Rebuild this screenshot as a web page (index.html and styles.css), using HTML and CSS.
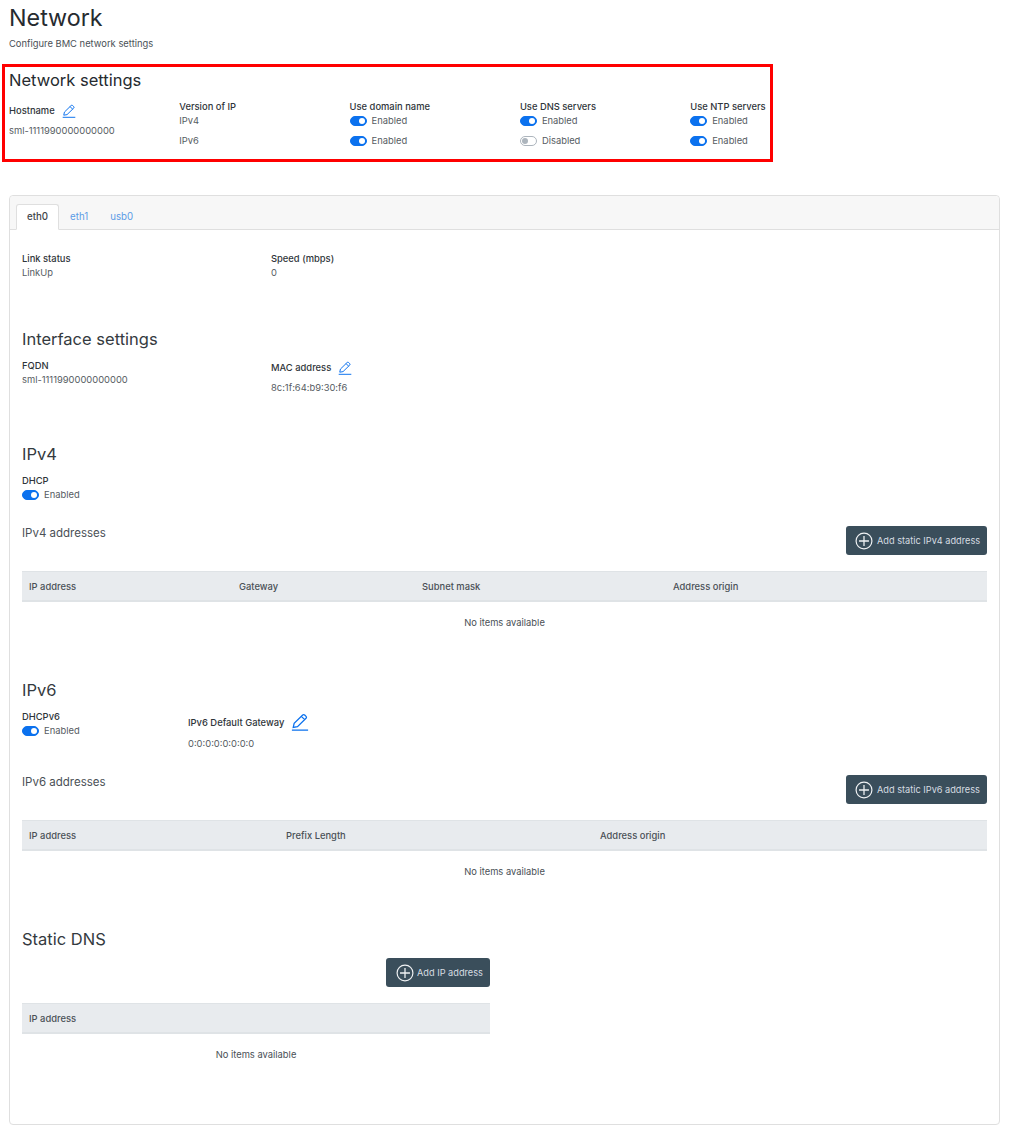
FILE: index.html
```html
<!DOCTYPE html>
<html lang="en">
<head>
<meta charset="utf-8">
<title>Network</title>
<link rel="stylesheet" href="styles.css">
</head>
<body>
<svg class="defs" width="0" height="0" aria-hidden="true">
  <symbol id="pencil" viewBox="0 0 20 20">
    <path d="M1 19h18M2.500 16l1-4.500L13 2.200c.7-.7 1.500-.7 2.200 0l1.500 1.500c.7.7.7 1.500 0 2.200L7.200 15.200 2.500 16zM11.500 3.700l3.700 3.700" fill="none" stroke="currentColor" stroke-width="1.400"/>
  </symbol>
  <symbol id="plus" viewBox="0 0 20 20">
    <circle cx="10" cy="10" r="8.800" fill="none" stroke="currentColor" stroke-width="1.300"/>
    <path d="M10 4.500v11M4.500 10h11" fill="none" stroke="currentColor" stroke-width="1.400"/>
  </symbol>
</svg>
<header class="page-head">
  <h1>Network</h1>
  <p class="lead">Configure BMC network settings</p>
</header>

<section class="global">
  <h2>Network settings</h2>
  <div class="global-grid">
    <div class="col">
      <div class="label-edit"><span class="label">Hostname</span><a class="edit"><svg><use href="#pencil"/></svg></a></div>
      <div class="value host">sml-1111990000000000</div>
    </div>
    <div class="col">
      <div class="label">Version of IP</div>
      <div class="row value">IPv4</div>
      <div class="row value">IPv6</div>
    </div>
    <div class="col">
      <div class="label">Use domain name</div>
      <div class="row"><span class="switch on"></span><span class="value">Enabled</span></div>
      <div class="row"><span class="switch on"></span><span class="value">Enabled</span></div>
    </div>
    <div class="col">
      <div class="label">Use DNS servers</div>
      <div class="row"><span class="switch on"></span><span class="value">Enabled</span></div>
      <div class="row"><span class="switch"></span><span class="value">Disabled</span></div>
    </div>
    <div class="col">
      <div class="label">Use NTP servers</div>
      <div class="row"><span class="switch on"></span><span class="value">Enabled</span></div>
      <div class="row"><span class="switch on"></span><span class="value">Enabled</span></div>
    </div>
  </div>
</section>

<section class="card">
  <nav class="tabs">
    <a class="tab active">eth0</a>
    <a class="tab">eth1</a>
    <a class="tab">usb0</a>
  </nav>
  <div class="card-body">
    <div class="two link">
      <div><div class="label">Link status</div><div class="value v-gap">LinkUp</div></div>
      <div><div class="label">Speed (mbps)</div><div class="value v-gap">0</div></div>
    </div>

    <h2 class="sec iface">Interface settings</h2>
    <div class="two iface-row">
      <div><div class="label fqdn">FQDN</div><div class="value fqdn-v">sml-1111990000000000</div></div>
      <div>
        <div class="label-edit"><span class="label">MAC address</span><a class="edit"><svg><use href="#pencil"/></svg></a></div>
        <div class="value host">8c:1f:64:b9:30:f6</div>
      </div>
    </div>

    <h2 class="sec ipv4">IPv4</h2>
    <div class="label sub">DHCP</div>
    <div class="row dhcp"><span class="switch on"></span><span class="value">Enabled</span></div>

    <div class="table-head t4">
      <h3>IPv4 addresses</h3>
      <button class="btn"><svg><use href="#plus"/></svg>Add static IPv4 address</button>
    </div>
    <div class="table">
      <div class="thead c4"><span>IP address</span><span>Gateway</span><span>Subnet mask</span><span>Address origin</span></div>
      <div class="empty">No items available</div>
    </div>

    <h2 class="sec ipv6">IPv6</h2>
    <div class="v6row sub">
      <div><div class="label">DHCPv6</div><div class="row dhcp"><span class="switch on"></span><span class="value">Enabled</span></div></div>
      <div>
        <div class="label-edit big"><span class="label">IPv6 Default Gateway</span><a class="edit"><svg><use href="#pencil"/></svg></a></div>
        <div class="value gw">0:0:0:0:0:0:0:0</div>
      </div>
    </div>

    <div class="table-head t6">
      <h3>IPv6 addresses</h3>
      <button class="btn"><svg><use href="#plus"/></svg>Add static IPv6 address</button>
    </div>
    <div class="table">
      <div class="thead c3"><span>IP address</span><span>Prefix Length</span><span>Address origin</span></div>
      <div class="empty">No items available</div>
    </div>

    <h2 class="sec dns">Static DNS</h2>
    <div class="dns-box">
      <div class="dns-action"><button class="btn small"><svg><use href="#plus"/></svg>Add IP address</button></div>
      <div class="table">
        <div class="thead"><span>IP address</span></div>
        <div class="empty">No items available</div>
      </div>
    </div>
  </div>
</section>
</body>
</html>
```
FILE: styles.css
```css
* { box-sizing: border-box; }
html, body { margin: 0; padding: 0; }
body {
  font-family: Inter, "Noto Sans", sans-serif;
  color: #343a40;
  background: #fff;
  height: 1135px;
  overflow: hidden;
}
.defs { position: absolute; }
h1, h2, h3, p { margin: 0; font-weight: 400; }

.page-head { padding: 3px 0 0 9px; }
h1 { font-size: 23.300px; line-height: 29px; color: #262b30; }
.lead { font-size: 9.400px; line-height: 12px; margin-top: 6px; color: #4a5056; }

.global {
  width: 771px;
  height: 98px;
  margin: 14px 0 0 2px;
  border: 3px solid #f00;
  padding: 1px 0 0 4px;
}
.global h2 { font-size: 16.500px; line-height: 24px; color: #262b30; }
.global-grid { display: grid; grid-template-columns: repeat(5, 170.300px); margin-top: 9px; }

.label { font-size: 9.400px; line-height: 12px; font-weight: 500; color: #2f353a; }
.value { font-size: 9.400px; line-height: 12px; color: #565c62; }
.row { display: flex; align-items: center; gap: 5px; height: 12px; margin-top: 2px; }
.row + .row { margin-top: 8px; }
.label-edit { display: flex; align-items: center; gap: 7px; height: 16px; margin-top: 2px; }
.edit { display: block; width: 14px; height: 14px; color: #0b71ee; }
.edit svg { display: block; width: 100%; height: 100%; }
.host { margin-top: 6px; }

.switch {
  display: block;
  width: 17px;
  height: 10px;
  border-radius: 5px;
  border: 1px solid #adb5bd;
  background: #fff;
  position: relative;
  flex: none;
}
.switch::after {
  content: "";
  position: absolute;
  top: 1px;
  left: 1px;
  width: 6px;
  height: 6px;
  border-radius: 50%;
  background: #adb5bd;
}
.switch.on { background: #0b71ee; border-color: #0b71ee; }
.switch.on::after { left: 8px; background: #fff; }

.card {
  width: 991px;
  height: 930px;
  margin: 33px 0 0 9px;
  border: 1px solid #dfdfdf;
  border-radius: 4px;
}
.tabs {
  display: flex;
  height: 34px;
  padding: 8px 0 0 6px;
  background: #f7f7f7;
  border-bottom: 1px solid #dfdfdf;
  border-radius: 4px 4px 0 0;
}
.tab {
  height: 26px;
  padding: 0 10px;
  font-size: 9.700px;
  line-height: 24px;
  color: #5b9be6;
  border: 1px solid transparent;
  border-radius: 3px 3px 0 0;
}
.tab.active {
  color: #3f454b;
  font-weight: 500;
  background: #fff;
  border-color: #dfdfdf;
  border-bottom-color: #fff;
}
.card-body { padding: 23px 12px 0; }
.two { display: grid; grid-template-columns: 249px 1fr; }
.v-gap { margin-top: 2px; }
.sec { font-size: 16.500px; line-height: 24px; color: #343a40; }
.iface { margin-top: 48px; }
.iface-row { margin-top: 7px; }
.fqdn { margin-top: 2px; }
.fqdn-v { margin-top: 2px; }
.ipv4 { margin-top: 48px; }
.sub { margin-top: 9px; }
.dhcp.row { margin-top: 2px; }

.table-head { display: flex; justify-content: space-between; align-items: flex-start; }
.table-head h3 { font-size: 11.500px; line-height: 16px; color: #4a5056; margin-top: -1px; }
.t4 { margin-top: 25px; }
.t6 { margin-top: 25px; }
.btn {
  display: flex;
  align-items: center;
  gap: 4px;
  width: 141px;
  height: 29px;
  padding: 0 0 0 9px;
  border: 0;
  border-radius: 3px;
  background: #3a4e5b;
  color: #d7dde2;
  font: 400 9.200px/12px Inter, sans-serif;
}
.btn svg { width: 18px; height: 18px; color: #f0f2f4; flex: none; }
.btn.small { width: 104px; gap: 3px; padding-left: 10px; }

.table { margin-top: 16px; }
.thead {
  display: grid;
  height: 31px;
  align-items: center;
  padding: 1px 0 0 7px;
  background: #e8ebee;
  border-top: 1px solid #dfe3e6;
  border-bottom: 2px solid #dfe3e6;
  font-size: 9.400px;
  font-weight: 500;
  color: #4a5056;
}
.c4 { grid-template-columns: 210px 183px 251px 1fr; }
.c3 { grid-template-columns: 257px 314px 1fr; }
.empty { height: 40px; padding-top: 1px; line-height: 40px; text-align: center; font-size: 9.400px; color: #4a5056; }

.ipv6 { margin-top: 36px; }
.v6row { display: grid; grid-template-columns: 166px 1fr; }
.big { margin-top: 2px; height: 20px; }
.big .edit { width: 18px; height: 18px; margin-top: -2px; }
.gw { margin-top: 5px; }

.dns { margin-top: 36px; }
.dns-box { width: 468px; }
.dns-action { display: flex; justify-content: flex-end; margin-top: 7px; }
.dns-box .table { margin-top: 16px; }
```
